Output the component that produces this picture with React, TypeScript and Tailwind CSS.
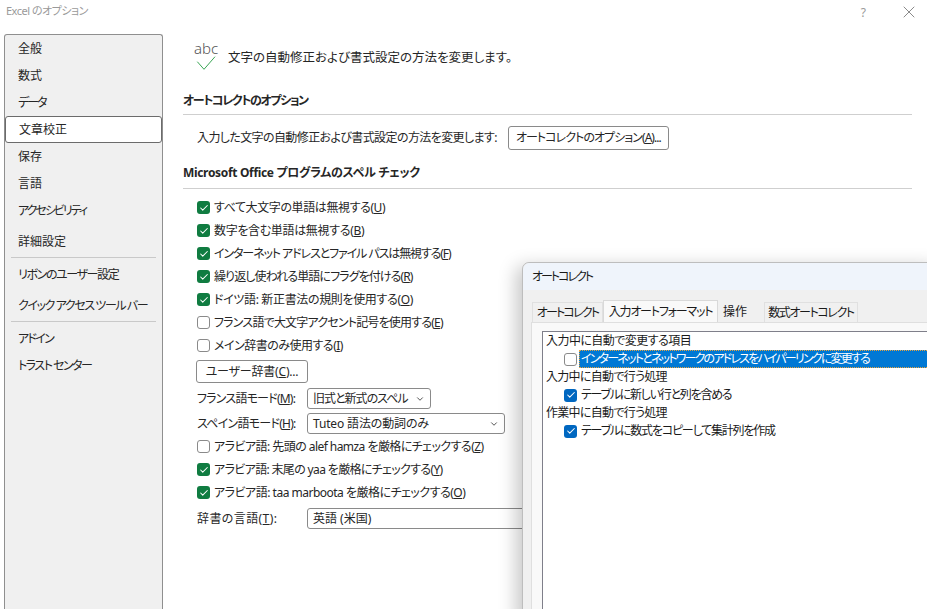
import { Check, ChevronDown, X } from "lucide-react";
import type { ReactNode } from "react";

const font = "[font-family:'Noto_Sans','Noto_Sans_CJK_JP',sans-serif] [font-feature-settings:'palt'] whitespace-nowrap";

function Key({ k }: { k: string }) {
  return (
    <>
      (<span className="underline">{k}</span>)
    </>
  );
}

function CheckBox({ checked, color = "bg-[#107c41]" }: { checked: boolean; color?: string }) {
  if (!checked) {
    return <span className="box-border block size-[13px] shrink-0 rounded-[3px] border border-[#8a8a8a] bg-white" />;
  }
  return (
    <span className={"flex size-[13px] shrink-0 items-center justify-center rounded-[3px] " + color}>
      <Check size={10} strokeWidth={2.5} color="#fff" />
    </span>
  );
}

function Option({ checked, tracking, children }: { checked: boolean; tracking: string; children: ReactNode }) {
  return (
    <div className="flex h-[23px] items-center gap-[4px]">
      <CheckBox checked={checked} />
      <span className={tracking}>{children}</span>
    </div>
  );
}

function Select({ width, children, arrow = true }: { width: string; children: ReactNode; arrow?: boolean }) {
  return (
    <div className={"flex h-[21px] items-center justify-between rounded-[3px] border border-[#8a8a8a] bg-white pl-[5px] pr-[5px] " + width}>
      <span>{children}</span>
      {arrow ? <ChevronDown size={10} color="#333" strokeWidth={2} /> : null}
    </div>
  );
}

function Sidebar() {
  const row = "flex items-center pl-[13px] text-[12px]";
  return (
    <aside className="ml-[4px] w-[159px] shrink-0 rounded-t-[3px] border border-b-0 border-[#8f8f8f] bg-[#f0f0f0] text-[#262626]">
      <div className={row + " h-[27px]"}>全般</div>
      <div className={row + " h-[27px]"}>数式</div>
      <div className={row + " h-[27px] tracking-[-2px]"}>データ</div>
      <div className={row + " h-[27px] rounded-[3px] border border-[#6b6b6b] bg-white"}>文章校正</div>
      <div className={row + " h-[27px]"}>保存</div>
      <div className={row + " h-[27px]"}>言語</div>
      <div className={row + " h-[27px] tracking-[-2px]"}>アクセシビリティ</div>
      <div className={row + " h-[31px] pt-[4px]"}>詳細設定</div>
      <div className="mx-[6px] mt-[2px] h-px bg-[#c9c9c9]" />
      <div className={row + " mt-[3px] h-[27px] tracking-[-1.4px]"}>リボンのユーザー設定</div>
      <div className={row + " mt-[4px] h-[27px] tracking-[-1.4px]"}>クイック アクセス ツール バー</div>
      <div className="mx-[6px] mt-[2px] h-px bg-[#c9c9c9]" />
      <div className={row + " mt-[3px] h-[27px] tracking-[-1.7px]"}>アドイン</div>
      <div className={row + " h-[27px] tracking-[-1.5px]"}>トラスト センター</div>
    </aside>
  );
}

function AutoCorrectDialog() {
  const group = "h-[18px] leading-[18px] pl-[3px]";
  return (
    <div className="absolute top-[262px] left-[522px] flex h-[360px] w-[420px] flex-col rounded-t-[7px] border border-[#bdbdbd] bg-[#f0f0f0] text-[12px] text-[#1a1a1a] shadow-[-6px_4px_18px_rgba(0,0,0,0.22)]">
      <div className="flex h-[27px] shrink-0 items-center rounded-t-[7px] bg-[#eff4fb] pl-[9px] tracking-[-2px]">オートコレクト</div>
      <div className="mt-[10px] flex h-[22px] items-end pl-[9px]">
        <div className="flex h-[20px] w-[71px] items-center justify-center border border-b-0 border-[#e0e0e0] bg-[#f0f0f0] tracking-[-1.8px]">オートコレクト</div>
        <div className="flex h-[22px] w-[115px] items-center justify-center border border-b-0 border-[#d9d9d9] bg-[#f9f9f9] tracking-[-1.2px]">入力オートフォーマット</div>
        <div className="flex h-[20px] w-[46px] items-center pl-[5px]">操作</div>
        <div className="flex h-[20px] w-[94px] items-center justify-center border border-b-0 border-[#e0e0e0] bg-[#f0f0f0] tracking-[-1.4px]">数式オートコレクト</div>
      </div>
      <div className="ml-[8px] flex-1 border-t border-l border-[#dfdfdf] bg-[#f9f9f9] pt-[8px] pl-[10px]">
        <div className="h-full border-t border-l border-[#7f7f8a] bg-white">
          <div className={group + " tracking-[-0.55px]"}>入力中に自動で変更する項目</div>
          <div className="flex h-[18px] items-center pl-[21px]">
            <CheckBox checked={false} color="bg-[#0067c0]" />
            <div className="ml-[2px] flex h-[18px] flex-1 items-center border border-dotted border-[#e8a33d] bg-[#0078d4] pl-[1px] tracking-[-1.8px] text-white">
              インターネットとネットワークのアドレスをハイパーリンクに変更する
            </div>
          </div>
          <div className={group + " tracking-[-0.7px]"}>入力中に自動で行う処理</div>
          <div className="flex h-[18px] items-center gap-[4px] pl-[21px]">
            <CheckBox checked color="bg-[#0067c0]" />
            <span className="tracking-[-1.25px]">テーブルに新しい行と列を含める</span>
          </div>
          <div className={group + " tracking-[-0.7px]"}>作業中に自動で行う処理</div>
          <div className="flex h-[18px] items-center gap-[4px] pl-[21px]">
            <CheckBox checked color="bg-[#0067c0]" />
            <span className="tracking-[-1.2px]">テーブルに数式をコピーして集計列を作成</span>
          </div>
        </div>
      </div>
    </div>
  );
}

export default function App() {
  return (
    <div className={"relative h-[609px] w-[927px] overflow-hidden bg-white " + font}>
      <header className="flex h-[34px] items-start justify-between pt-[2px] pr-[8px] pl-[6px] text-[11px] leading-[17px] text-[#9a9a9a]">
        <span className="tracking-[-0.5px]">Excel のオプション</span>
        <div className="flex items-center gap-[33px]">
          <span className="text-[12px]">?</span>
          <X size={20} strokeWidth={1.2} color="#8a8a8a" />
        </div>
      </header>
      <div className="flex h-[575px]">
        <Sidebar />
        <main className="ml-[20px] flex-1 pr-[15px] text-[12px] text-[#262626]">
          <div className="flex h-[42px] items-start pt-[5px] pl-[11px]">
            <div className="mt-[1px] flex w-[24px] flex-col items-center">
              <span className="text-[15px] leading-[16px] font-light text-[#555]">abc</span>
              <svg width="20" height="14" viewBox="0 0 20 14">
                <path d="M1.3 5.7 L8 13.3 L19 0.7" fill="none" stroke="#3aa655" strokeWidth="1" />
              </svg>
            </div>
            <span className="mt-[10px] ml-[10px] text-[12.5px] leading-[17px]">文字の自動修正および書式設定の方法を変更します。</span>
          </div>
          <div className="mt-[16px] border-b border-[#cfcfcf] pb-[5px] leading-[17px] font-bold tracking-[-1.4px]">
            オートコレクトのオプション
          </div>
          <div className="mt-[11px] flex h-[24px] items-center pl-[14px]">
            <span className="tracking-[-0.6px]">入力した文字の自動修正および書式設定の方法を変更します:</span>
            <button className="ml-[11px] h-[24px] w-[161px] rounded-[3px] border border-[#8a8a8a] bg-white text-[12px] tracking-[-0.95px]">
              オートコレクトのオプション<Key k="A" />...
            </button>
          </div>
          <div className="mt-[14px] border-b border-[#cfcfcf] pb-[7px] leading-[17px] font-bold tracking-[-0.33px]">
            Microsoft Office プログラムのスペル チェック
          </div>
          <div className="mt-[7px] pl-[14px]">
            <Option checked tracking="tracking-[-0.4px]">すべて大文字の単語は無視する<Key k="U" /></Option>
            <Option checked tracking="tracking-[-0.33px]">数字を含む単語は無視する<Key k="B" /></Option>
            <Option checked tracking="tracking-[-1.1px]">インターネット アドレスとファイル パスは無視する<Key k="F" /></Option>
            <Option checked tracking="tracking-[-0.9px]">繰り返し使われる単語にフラグを付ける<Key k="R" /></Option>
            <Option checked tracking="tracking-[-0.35px]">ドイツ語: 新正書法の規則を使用する<Key k="O" /></Option>
            <Option checked={false} tracking="tracking-[-0.8px]">フランス語で大文字アクセント記号を使用する<Key k="E" /></Option>
            <Option checked={false} tracking="tracking-[-0.5px]">メイン辞書のみ使用する<Key k="I" /></Option>
            <button className="mt-[3px] -ml-[1px] h-[23px] w-[112px] rounded-[3px] border border-[#8a8a8a] bg-white text-[12px] tracking-[-0.2px]">
              ユーザー辞書<Key k="C" />...
            </button>
            <div className="mt-[5px] flex items-center">
              <span className="w-[110px] tracking-[-0.8px]">フランス語モード<Key k="M" />:</span>
              <Select width="w-[124px]"><span className="tracking-[-1px]">旧式と新式のスペル</span></Select>
            </div>
            <div className="mt-[4px] flex items-center">
              <span className="w-[110px] tracking-[-0.75px]">スペイン語モード<Key k="H" />:</span>
              <Select width="w-[198px]"><span className="tracking-[-0.15px]">Tuteo 語法の動詞のみ</span></Select>
            </div>
            <div className="mt-[1px]">
              <Option checked={false} tracking="tracking-[-0.55px]">アラビア語: 先頭の alef hamza を厳格にチェックする<Key k="Z" /></Option>
              <Option checked tracking="tracking-[-0.65px]">アラビア語: 末尾の yaa を厳格にチェックする<Key k="Y" /></Option>
              <Option checked tracking="tracking-[-0.5px]">アラビア語: taa marboota を厳格にチェックする<Key k="O" /></Option>
            </div>
            <div className="mt-[4px] flex items-center">
              <span className="w-[110px] tracking-[0.4px]">辞書の言語<Key k="T" />:</span>
              <Select width="w-[260px]" arrow={false}>英語 (米国)</Select>
            </div>
          </div>
        </main>
      </div>
      <AutoCorrectDialog />
    </div>
  );
}
